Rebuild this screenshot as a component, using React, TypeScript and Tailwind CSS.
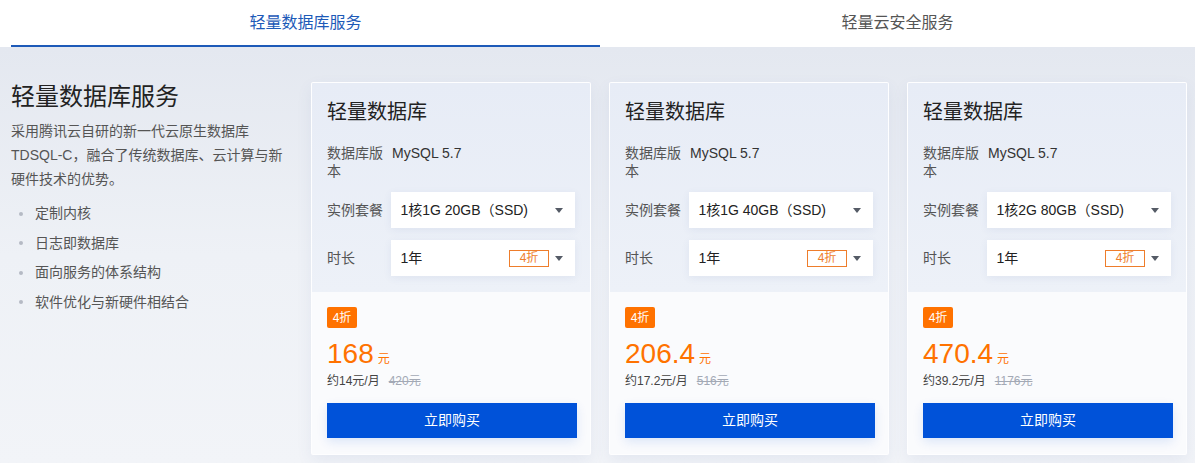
import React from "react";

type Plan = {
  spec: string;
  price: string;
  monthly: string;
  original: string;
};

const plans: Plan[] = [
  { spec: "1核1G 20GB（SSD)", price: "168", monthly: "约14元/月", original: "420元" },
  { spec: "1核1G 40GB（SSD)", price: "206.4", monthly: "约17.2元/月", original: "516元" },
  { spec: "1核2G 80GB（SSD)", price: "470.4", monthly: "约39.2元/月", original: "1176元" },
];

const features = ["定制内核", "日志即数据库", "面向服务的体系结构", "软件优化与新硬件相结合"];

function Caret() {
  return (
    <svg width="8" height="5" viewBox="0 0 8 5" className="shrink-0">
      <path d="M0 0h8L4 5z" fill="#555b66" />
    </svg>
  );
}

function PlanCard({ plan }: { plan: Plan }) {
  return (
    <div className="w-[280px] h-[373px] flex flex-col rounded-[2px] border border-white/80 bg-[#fafbfd] shadow-[0_6px_16px_rgba(60,90,150,0.08)] overflow-hidden">
      <div className="px-[15px] pt-[15px] pb-[16px] bg-gradient-to-b from-[#e7ecf6] to-[#edf1f8]">
        <h3 className="text-[20px] leading-[28px] text-[#222]">轻量数据库</h3>
        <div className="mt-[18px] flex text-[14px] leading-[18px]">
          <div className="w-[65px] pr-[6px] text-[#555]">数据库版本</div>
          <div className="text-[#333]">MySQL 5.7</div>
        </div>
        <div className="mt-[12px] flex items-center text-[14px]">
          <div className="w-[65px] text-[#555]">实例套餐</div>
          <div className="w-[185px] h-[36px] flex items-center pl-[9px] pr-[12px] bg-white shadow-[0_2px_8px_rgba(60,90,150,0.08)]">
            <span className="flex-1 text-[#222]">{plan.spec}</span>
            <Caret />
          </div>
        </div>
        <div className="mt-[12px] flex items-center text-[14px]">
          <div className="w-[65px] text-[#555]">时长</div>
          <div className="w-[185px] h-[36px] flex items-center pl-[9px] pr-[12px] bg-white shadow-[0_2px_8px_rgba(60,90,150,0.08)]">
            <span className="flex-1 text-[#222]">1年</span>
            <span className="w-[40px] h-[17px] flex items-center justify-center border border-[#ee7d2b] text-[12px] leading-none text-[#ee7d2b] mr-[6px]">
              4折
            </span>
            <Caret />
          </div>
        </div>
      </div>
      <div className="flex flex-col items-start px-[15px] pt-[15px] pb-[17px]">
        <span className="flex w-[30px] h-[21px] items-center justify-center rounded-[2px] bg-[#ff7200] text-[12px] text-white">
          4折
        </span>
        <div className="mt-[10px] flex items-baseline h-[32px] leading-[32px] text-[#ff7200]">
          <span className="text-[28px]">{plan.price}</span>
          <span className="ml-[4px] text-[12px]">元</span>
        </div>
        <div className="mt-[2px] flex text-[12px] leading-[18px]">
          <span className="text-[#444]">{plan.monthly}</span>
          <span className="ml-[9px] text-[#a3a9b5] line-through">{plan.original}</span>
        </div>
        <button className="mt-[13px] w-[250px] h-[35px] bg-[#0052d9] text-white text-[14px] shadow-[0_4px_10px_rgba(0,82,217,0.12)]">
          立即购买
        </button>
      </div>
    </div>
  );
}

export default function App() {
  return (
    <div
      className="w-[1195px] h-[463px] overflow-hidden bg-[#f1f3f7]"
      style={{ fontFamily: '"Liberation Sans", "Noto Sans CJK SC", sans-serif' }}
    >
      <div className="h-[47px] bg-white flex pl-[11px]">
        <div className="w-[589px] flex items-center justify-center border-b-2 border-[#1d5ab8] text-[16px] text-[#1d5ab8] pt-[1px]">
          轻量数据库服务
        </div>
        <div className="flex-1 flex items-center justify-center text-[16px] text-[#555] pb-[1px]">
          轻量云安全服务
        </div>
      </div>
      <div className="h-[416px] flex pt-[35px] bg-gradient-to-b from-[#e4e8f0] via-[#eef1f6] to-[#f2f4f8]">
        <div className="w-[311px] shrink-0 pl-[11px]">
          <h2 className="text-[24px] leading-[30px] text-[#222]">轻量数据库服务</h2>
          <p className="mt-[7px] text-[14px] leading-[24px] text-[#555]">
            采用腾讯云自研的新一代云原生数据库
            <br />
            TDSQL-C，融合了传统数据库、云计算与新
            <br />
            硬件技术的优势。
          </p>
          <ul className="mt-[8px]">
            {features.map((f) => (
              <li key={f} className="flex items-center h-[29.5px] text-[14px] text-[#555]">
                <span className="ml-[8px] w-[4px] h-[4px] rounded-full bg-[#b5bac4]" />
                <span className="ml-[12px]">{f}</span>
              </li>
            ))}
          </ul>
        </div>
        <div className="flex gap-[18px]">
          {plans.map((p) => (
            <PlanCard key={p.price} plan={p} />
          ))}
        </div>
      </div>
    </div>
  );
}
